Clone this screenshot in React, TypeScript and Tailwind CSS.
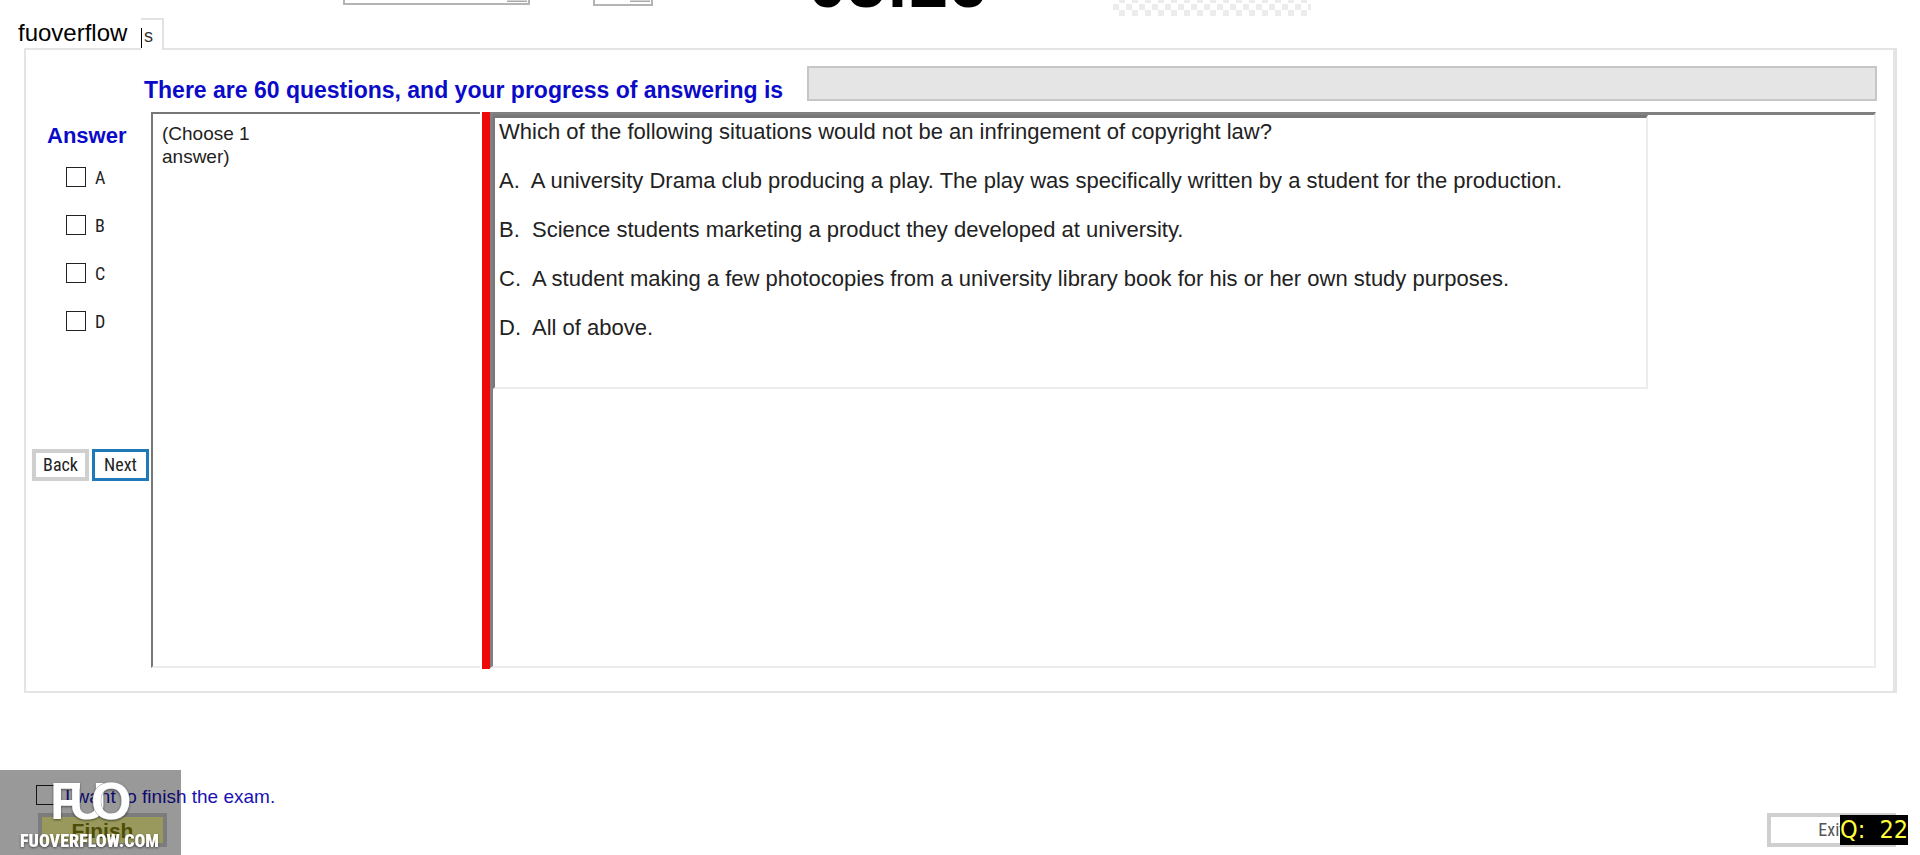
import React, { useState } from "react";

const answers = ["A", "B", "C", "D"];

const options = [
  { key: "A", text: "A university Drama club producing a play. The play was specifically written by a student for the production." },
  { key: "B", text: "Science students marketing a product they developed at university." },
  { key: "C", text: "A student making a few photocopies from a university library book for his or her own study purposes." },
  { key: "D", text: "All of above." },
];

function TopBar() {
  return (
    <header className="flex items-end h-[18px] overflow-hidden pl-[343px]">
      <div className="relative w-[187px] h-7 mb-[13px] shrink-0">
        <select aria-label="Font" className="appearance-none w-full h-full bg-white border-2 border-[#b4b4b4]" />
        <span className="absolute right-[3px] bottom-[3px] w-5 h-5 bg-[#d4d4d4] border-b border-[#aaa]" />
      </div>
      <div className="relative w-[60px] h-7 mb-[12px] ml-[63px] shrink-0">
        <select aria-label="Size" className="appearance-none w-full h-full bg-white border-2 border-[#b4b4b4]" />
        <span className="absolute right-[3px] bottom-1 w-5 h-5 bg-[#d4d4d4] border-b border-[#aaa]" />
      </div>
      <div className="ml-[155px] shrink-0 text-[70px] leading-[70px] font-bold text-black">
        05:26
      </div>
      <svg className="ml-[126px] mb-px w-[198px] h-[26px] shrink-0">
        <defs>
          <pattern id="checks" width="13" height="13" patternUnits="userSpaceOnUse">
            <rect width="6" height="6" fill="#ececec" />
            <rect x="6" y="6" width="6" height="6" fill="#ececec" />
          </pattern>
        </defs>
        <rect width="198" height="26" fill="url(#checks)" />
      </svg>
    </header>
  );
}

function TabStrip() {
  return (
    <div className="flex h-[30px]">
      <div className="relative z-10 flex items-center w-[141px] h-[30px] bg-white text-2xl leading-6 text-black pl-[18px]">
        fuoverflow
      </div>
      <div className="relative z-10 w-[23px] h-8 bg-white border-t-2 border-r-2 border-[#e2e2e2]">
        <div className="flex items-center mt-2 h-5 pb-1 border-l border-black text-[18px] text-[#333] pl-0.5">
          s
        </div>
      </div>
    </div>
  );
}

function AnswerColumn() {
  const [checked, setChecked] = useState<string[]>([]);

  const toggle = (key: string) =>
    setChecked((prev) => (prev.includes(key) ? prev.filter((k) => k !== key) : [...prev, key]));

  return (
    <div className="w-[125px] shrink-0">
      <h2 className="mt-3 pl-[21px] text-[22px] leading-6 font-bold text-[#0a0ac8]">Answer</h2>
      <div className="flex flex-col gap-6 mt-[17px] pl-10 font-['Roboto_Condensed',Roboto,sans-serif]">
        {answers.map((key) => (
          <label key={key} className="flex items-center gap-[9px] h-6 text-[18px] text-[#222]">
            <input
              type="checkbox"
              checked={checked.includes(key)}
              onChange={() => toggle(key)}
              className="appearance-none w-5 h-5 border border-[#222] bg-white checked:bg-[#444]"
            />
            {key}
          </label>
        ))}
      </div>
      <div className="flex gap-[3px] mt-[116px] pl-[6px] font-['Roboto_Condensed',Roboto,sans-serif]">
        <button className="w-[57px] h-8 border-4 border-[#cfcfcf] bg-white text-[18px] leading-6 text-[#222]">
          Back
        </button>
        <button className="w-[57px] h-8 border-[3px] border-[#1f78b8] bg-white text-[18px] leading-6 text-[#222]">
          Next
        </button>
      </div>
    </div>
  );
}

function QuestionPanel() {
  return (
    <main className="ml-6 mr-[23px] h-[645px] border-2 border-r-4 border-[#e4e4e4]">
      <div className="flex items-center h-[35px] mt-4 mr-4 pl-[118px]">
        <span id="progress-label" className="w-[663px] pt-3 shrink-0 text-[23px] leading-6 font-bold text-[#0a0ac8]">
          There are 60 questions, and your progress of answering is
        </span>
        <progress
          aria-labelledby="progress-label"
          value={0}
          max={60}
          className="appearance-none flex-1 h-[35px] border-2 border-[#c6c6c6] [&::-webkit-progress-bar]:bg-[#e5e5e5]"
        />
      </div>
      <div className="flex h-[557px] mt-[11px] mr-[17px]">
        <AnswerColumn />
        <div className="w-[329px] shrink-0 mb-px border-t-2 border-l-2 border-b-2 border-[#777] border-b-[#ececec] p-2 pl-[9px] text-[19px] leading-[23px] text-[#222]">
          <p className="w-32">(Choose 1 answer)</p>
        </div>
        <div className="w-2 ml-[2px] shrink-0 bg-[#ee0808]" />
        <div className="flex-1 mb-px border-2 border-t-[3px] border-l-[3px] border-[#ececec] border-t-[#808080] border-l-[#808080]">
          <div className="w-full max-w-[1155px] h-[274px] border-2 border-t-[3px] border-[#ececec] border-t-[#777] border-l-[#777] pt-0.5 pl-1 text-[22px] leading-6 text-[#222]">
            <p>Which of the following situations would not be an infringement of copyright law?</p>
            {options.map((o) => (
              <p key={o.key} className="mt-[25px] whitespace-pre">
                {o.key}.{"  "}
                {o.text}
              </p>
            ))}
          </div>
        </div>
      </div>
    </main>
  );
}

function Watermark() {
  return (
    <div className="absolute left-0 bottom-0 w-[181px] h-[85px] bg-black/40">
      <svg viewBox="0 0 181 85" className="w-full h-full fill-white font-bold drop-shadow-[0_1px_1px_rgba(0,0,0,0.5)]">
        <text x="50" y="49" fontSize="52">F</text>
        <text x="69" y="49" fontSize="52">U</text>
        <text x="91" y="49" fontSize="52" stroke="#999" strokeWidth="1" paintOrder="stroke">O</text>
        <text x="20" y="77" className="text-[18px] font-black font-['Roboto_Condensed',Roboto,sans-serif]">
          FUOVERFLOW.COM
        </text>
      </svg>
    </div>
  );
}

function Footer() {
  return (
    <footer className="relative flex justify-between mt-[77px] h-[85px]">
      <div className="pl-9 pt-[15px]">
        <label className="flex items-center gap-[9px] h-5 text-[19px] text-[#1a12b4]">
          <input type="checkbox" className="appearance-none w-5 h-5 border border-[#222] bg-white" />
          <span className="pt-1">I want to finish the exam.</span>
        </label>
        <button className="block mt-2 ml-0.5 w-[129px] h-[34px] border-4 border-[#cfcfcf] bg-[#ffff9c] text-[21px] leading-7 font-bold text-[#80800a]">
          Finish
        </button>
      </div>
      <Watermark />
      <div className="relative self-end mb-2 mr-3 w-[141px]">
        <button className="block w-[129px] h-[34px] border-4 border-[#cfcfcf] bg-white text-[18px] leading-6 text-[#555] font-['Roboto_Condensed',Roboto,sans-serif]">
          Exit
        </button>
        <div className="absolute right-0 top-0.5 w-[68px] h-[30px] bg-black text-[#ffff3c] text-[25px] leading-[30px] whitespace-pre font-['DejaVu_Sans_Condensed','DejaVu_Sans',sans-serif]">
          Q:  22
        </div>
      </div>
    </footer>
  );
}

export default function App() {
  return (
    <div className="bg-white overflow-hidden font-['Liberation_Sans',Arial,sans-serif]">
      <TopBar />
      <TabStrip />
      <QuestionPanel />
      <Footer />
    </div>
  );
}
